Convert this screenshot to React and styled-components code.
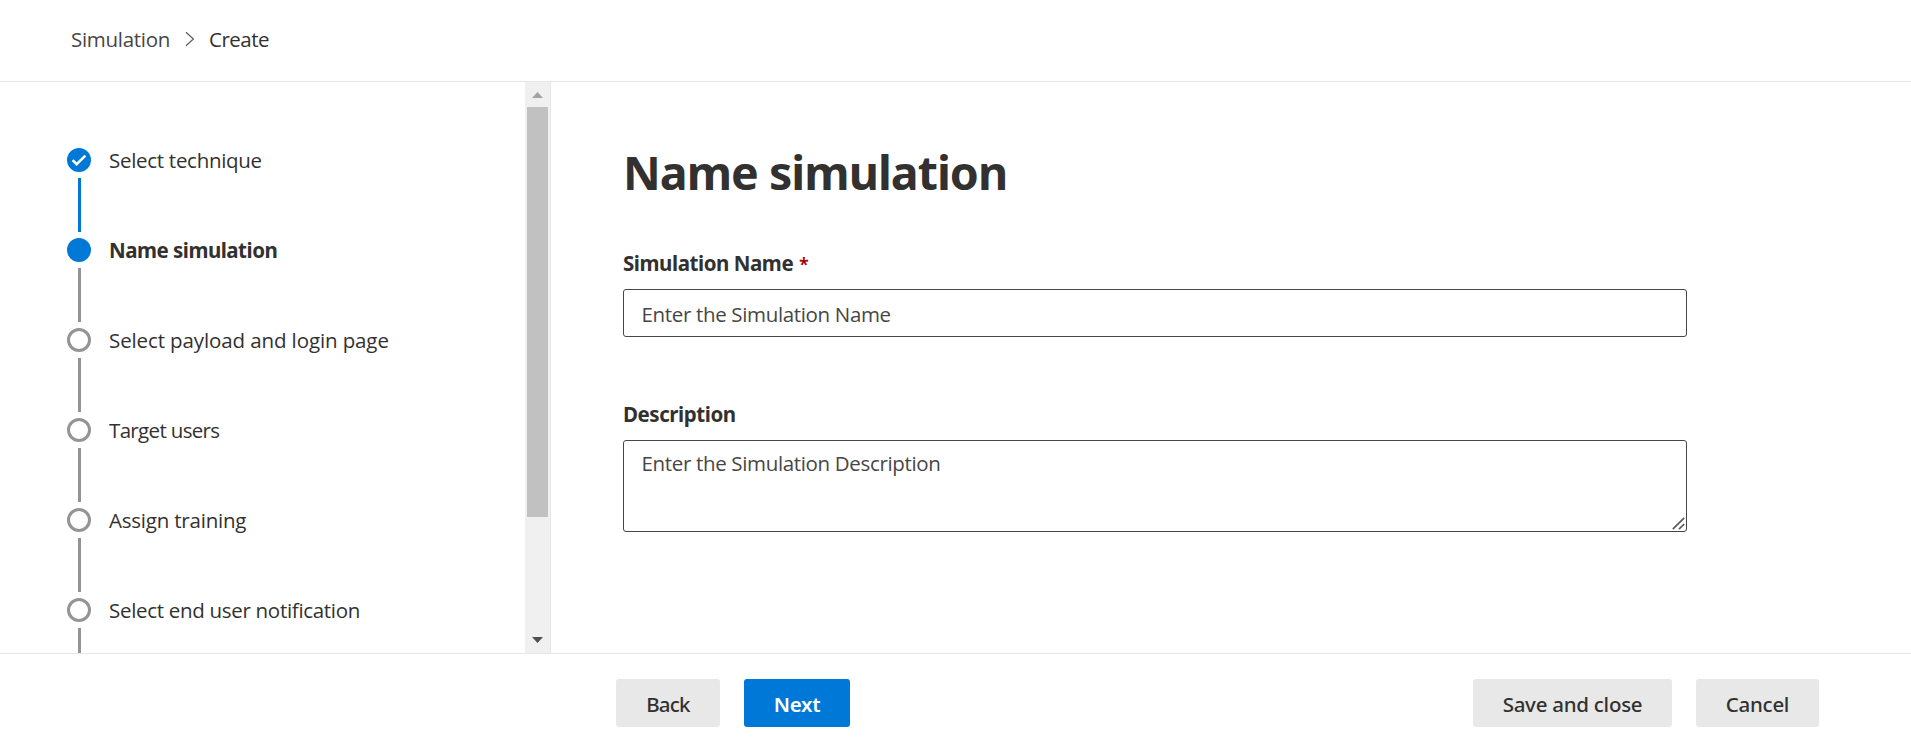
import React from 'react';
import styled, { createGlobalStyle } from 'styled-components';

const ink = '#323130';
const subtle = '#484644';
const blue = '#0078d7';
const grey = '#949494';
const line = '#e6e6e6';

const GlobalStyle = createGlobalStyle`
  *, *::before, *::after { box-sizing: border-box; }
  body {
    margin: 0;
    background: #fff;
    color: ${ink};
    font: 400 20.5px/28px "Open Sans", "Noto Sans", sans-serif;
    overflow: hidden;
  }
`;

const Page = styled.div`
  display: flex;
  flex-direction: column;
  height: 100vh;
`;

const Text = styled.span`
  letter-spacing: ${p => p.$track || 0}px;
  white-space: nowrap;
`;

const Header = styled.nav`
  display: flex;
  align-items: center;
  flex: none;
  height: 82px;
  padding: 0 0 3px 71px;
  border-bottom: 1px solid ${line};
`;

const Crumb = styled(Text)`
  color: ${p => (p.$current ? ink : subtle)};
`;

const Chevron = styled.svg`
  width: 10px;
  height: 16px;
  margin: 0 14px 0 15px;
  fill: none;
  stroke: #605e5c;
  stroke-width: 1.2;
`;

const Body = styled.div`
  display: flex;
  flex: none;
  height: 571px;
`;

const Sidebar = styled.aside`
  display: flex;
  justify-content: space-between;
  width: 551px;
  border-right: 1px solid ${line};
  overflow: hidden;
`;

const Steps = styled.ol`
  list-style: none;
  margin: 0;
  padding: 66px 0 0 67px;
  height: 571px;
  overflow: hidden;
`;

const Step = styled.li`
  display: flex;
  gap: 18px;
  height: 90px;
`;

const Rail = styled.div`
  display: flex;
  flex-direction: column;
  align-items: flex-start;
  gap: 6px;
  width: 24px;
`;

const Marker = styled.div`
  display: grid;
  place-items: center;
  width: 24px;
  height: 24px;
  border-radius: 50%;
  border: 3px solid ${p => (p.$filled ? blue : grey)};
  background: ${p => (p.$filled ? blue : '#fff')};
`;

const Connector = styled.div`
  width: 3px;
  height: 54px;
  margin-left: 11px;
  background: ${p => (p.$done ? blue : grey)};
`;

const StepLabel = styled(Text)`
  height: 24px;
  line-height: 24px;
  font-weight: ${p => (p.$current ? 700 : 400)};
  font-family: ${p => (p.$current ? '"Noto Sans"' : '"Open Sans"')}, sans-serif;
`;

const Scrollbar = styled.div`
  display: flex;
  flex-direction: column;
  align-items: center;
  width: 25px;
  height: 571px;
  background: #f0f0f0;
`;

const ScrollArrow = styled.svg`
  flex: none;
  width: 25px;
  height: 25px;
  fill: ${p => p.$color};
`;

const Thumb = styled.div`
  width: 21px;
  height: 410px;
  background: #c1c1c1;
`;

const ScrollTrack = styled.div`
  flex: 1;
`;

const Main = styled.main`
  display: flex;
  flex-direction: column;
  flex: 1;
  padding: 58px 0 0 72px;
`;

const Title = styled.h1`
  margin: 0;
  font: 700 46.5px/64px "Noto Sans", sans-serif;
  letter-spacing: -0.97px;
`;

const Field = styled.div`
  display: flex;
  flex-direction: column;
  width: 1064px;
  margin-top: ${p => p.$top}px;
`;

const Label = styled.label`
  height: 28px;
  margin-bottom: 12px;
  font-family: "Noto Sans", sans-serif;
  font-weight: 700;
  letter-spacing: -0.44px;
`;

const Required = styled.span`
  margin-left: 1px;
  color: #a80000;
  font-size: 18px;
  font-weight: 600;
`;

const control = `
  display: block;
  width: 1064px;
  margin: 0;
  border: 1px solid ${subtle};
  border-radius: 3px;
  background: #fff;
  color: ${ink};
  font: 400 20.5px/28px "Open Sans", sans-serif;
  letter-spacing: -0.34px;
  outline: none;
  &::placeholder { color: ${subtle}; opacity: 1; }
`;

const Input = styled.input`
  ${control}
  height: 48px;
  padding: 2px 17.5px 0;
`;

const AreaWrap = styled.div`
  position: relative;
  height: 92px;
`;

const TextArea = styled.textarea`
  ${control}
  height: 92px;
  padding: 8px 17.5px 0;
  resize: none;
`;

const Grip = styled.svg`
  position: absolute;
  right: 2px;
  bottom: 2px;
  width: 13px;
  height: 13px;
  stroke: #5c5c5c;
  stroke-width: 1.7;
`;

const Footer = styled.footer`
  display: flex;
  align-items: flex-start;
  flex: none;
  gap: 24px;
  height: 88px;
  padding: 25px 92px 0 616px;
  border-top: 1px solid ${line};
`;

const Spacer = styled.div`
  flex: 1;
`;

const Button = styled.button`
  width: ${p => p.$width}px;
  height: 48px;
  padding: 1px 0 0;
  border: 0;
  border-radius: 3px;
  background: ${p => (p.$primary ? blue : '#e8e8e8')};
  color: ${p => (p.$primary ? '#fff' : ink)};
  font: ${p => (p.$primary ? 600 : 500)} 20.5px/28px "Noto Sans", sans-serif;
  letter-spacing: ${p => p.$track}px;
`;

const steps = [
  { label: 'Select technique', state: 'done', track: -0.29 },
  { label: 'Name simulation', state: 'current', track: -0.5 },
  { label: 'Select payload and login page', track: -0.11 },
  { label: 'Target users', track: -0.66 },
  { label: 'Assign training', track: -0.21 },
  { label: 'Select end user notification', track: -0.3 },
];

const CheckIcon = () => (
  <svg width="18" height="18" viewBox="0 0 18 18" fill="none" stroke="#fff" strokeWidth="2.5">
    <path d="M2.6 9.2 L6.6 13.2 L15.4 4.6" />
  </svg>
);

export default function App() {
  return (
    <Page>
      <GlobalStyle />
      <Header>
        <Crumb $track={-0.29}>Simulation</Crumb>
        <Chevron viewBox="0 0 10 16">
          <path d="M1 1.2 L8.4 8 L1 14.8" />
        </Chevron>
        <Crumb $current $track={-0.5}>Create</Crumb>
      </Header>
      <Body>
        <Sidebar>
          <Steps>
            {steps.map(s => (
              <Step key={s.label}>
                <Rail>
                  <Marker $filled={!!s.state}>{s.state === 'done' && <CheckIcon />}</Marker>
                  <Connector $done={s.state === 'done'} />
                </Rail>
                <StepLabel $current={s.state === 'current'} $track={s.track}>{s.label}</StepLabel>
              </Step>
            ))}
          </Steps>
          <Scrollbar>
            <ScrollArrow $color="#a3a3a3" viewBox="0 0 25 25">
              <path d="M7 16 L12.5 10 L18 16 Z" />
            </ScrollArrow>
            <Thumb />
            <ScrollTrack />
            <ScrollArrow $color="#505050" viewBox="0 0 25 25">
              <path d="M7 9 L18 9 L12.5 15 Z" />
            </ScrollArrow>
          </Scrollbar>
        </Sidebar>
        <Main>
          <Title>Name simulation</Title>
          <Field $top={45}>
            <Label htmlFor="name">Simulation Name <Required>*</Required></Label>
            <Input id="name" placeholder="Enter the Simulation Name" />
          </Field>
          <Field $top={63}>
            <Label htmlFor="description">Description</Label>
            <AreaWrap>
              <TextArea id="description" placeholder="Enter the Simulation Description" />
              <Grip viewBox="0 0 13 13">
                <path d="M0.8 12.2 L12.2 0.8 M7 12.2 L12.2 7" />
              </Grip>
            </AreaWrap>
          </Field>
        </Main>
      </Body>
      <Footer>
        <Button $width={104} $track={-0.8}>Back</Button>
        <Button $width={106} $track={-0.3} $primary>Next</Button>
        <Spacer />
        <Button $width={199} $track={-0.26}>Save and close</Button>
        <Button $width={123} $track={-0.28}>Cancel</Button>
      </Footer>
    </Page>
  );
}
